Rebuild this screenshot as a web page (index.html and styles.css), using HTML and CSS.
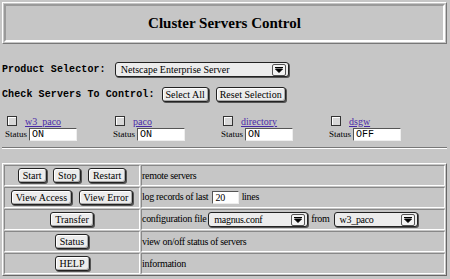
FILE: index.html
```html
<!DOCTYPE html>
<html lang="en">
<head>
    <meta charset="UTF-8">
    <title>Cluster Servers Control</title>
    <link rel="stylesheet" href="styles.css">
</head>
<body>
    <div class="banner">
        <div class="banner-inner">
            <h1>Cluster Servers Control</h1>
        </div>
    </div>

    <div class="form-row product-row">
        <span class="label">Product Selector:</span>
        <span class="select wide">
            <span class="select-text">Netscape Enterprise Server</span>
            <span class="arrow"><svg width="8" height="6" viewBox="0 0 8 6"><path d="M0 0.5h8M0.5 2h7L4 5.5z" stroke="#000" stroke-width="1" fill="#000"/></svg></span>
        </span>
    </div>

    <div class="form-row check-row">
        <span class="label">Check Servers To Control:</span>
        <button class="btn">Select All</button>
        <button class="btn">Reset Selection</button>
    </div>

    <div class="servers">
        <div class="server">
            <div class="server-name"><span class="checkbox"></span><a href="#">w3_paco</a></div>
            <div class="server-status">Status <span class="field">ON</span></div>
        </div>
        <div class="server">
            <div class="server-name"><span class="checkbox"></span><a href="#">paco</a></div>
            <div class="server-status">Status <span class="field">ON</span></div>
        </div>
        <div class="server">
            <div class="server-name"><span class="checkbox"></span><a href="#">directory</a></div>
            <div class="server-status">Status <span class="field">ON</span></div>
        </div>
        <div class="server">
            <div class="server-name"><span class="checkbox"></span><a href="#">dsgw</a></div>
            <div class="server-status">Status <span class="field">OFF</span></div>
        </div>
    </div>

    <hr class="rule">

    <table class="controls">
        <tr>
            <td class="actions">
                <button class="btn">Start</button>
                <button class="btn">Stop</button>
                <button class="btn">Restart</button>
            </td>
            <td class="desc">remote servers</td>
        </tr>
        <tr>
            <td class="actions">
                <button class="btn">View Access</button>
                <button class="btn">View Error</button>
            </td>
            <td class="desc">log records of last <span class="field small">20</span> lines</td>
        </tr>
        <tr>
            <td class="actions"><button class="btn">Transfer</button></td>
            <td class="desc">configuration file<span class="select conf">
                    <span class="select-text">magnus.conf</span>
                    <span class="arrow"><svg width="8" height="6" viewBox="0 0 8 6"><path d="M0 0.5h8M0.5 2h7L4 5.5z" stroke="#000" stroke-width="1" fill="#000"/></svg></span>
                </span>from<span class="select from">
                    <span class="select-text">w3_paco</span>
                    <span class="arrow"><svg width="8" height="6" viewBox="0 0 8 6"><path d="M0 0.5h8M0.5 2h7L4 5.5z" stroke="#000" stroke-width="1" fill="#000"/></svg></span>
                </span>
            </td>
        </tr>
        <tr>
            <td class="actions"><button class="btn">Status</button></td>
            <td class="desc">view on/off status of servers</td>
        </tr>
        <tr>
            <td class="actions"><button class="btn">HELP</button></td>
            <td class="desc">information</td>
        </tr>
    </table>
</body>
</html>
```

FILE: styles.css
```css
body {
    margin: 0;
    padding: 2px 3px 0 2px;
    background: #c6c6c6;
    font-family: 'Liberation Serif', 'Times New Roman', serif;
    font-size: 10px;
    color: #000;
}

.banner {
    height: 42px;
    border: 1px solid;
    border-color: #fff #777 #777 #fff;
    padding: 1px;
    box-sizing: border-box;
}

.banner-inner {
    height: 100%;
    box-sizing: border-box;
    border: 2px solid;
    border-color: #9a9a9a #fff #fff #9a9a9a;
    display: flex;
    align-items: center;
    justify-content: center;
}

h1 {
    margin: 0;
    font-size: 15px;
    font-weight: bold;
}

.form-row {
    display: flex;
    align-items: center;
}

.product-row {
    margin-top: 17px;
    height: 17px;
}

.check-row {
    margin-top: 8px;
    height: 16px;
}

.label {
    font-family: 'Liberation Mono', 'Courier New', monospace;
    font-weight: bold;
    font-size: 10px;
    letter-spacing: 0.1px;
    margin-right: 9px;
}

.check-row .label {
    margin-right: 5px;
}

.btn {
    font-family: 'Liberation Serif', 'Times New Roman', serif;
    font-size: 10px;
    background: #ececec;
    border: 1px solid #222;
    border-radius: 3px;
    box-shadow: 1px 1px 0 #555, inset -1px -1px 0 #aaa, inset 1px 1px 0 #fff;
    padding: 0 4px;
    height: 15px;
    margin: 0 2px;
    line-height: 13px;
}

.check-row .btn {
    padding: 0 3px;
    margin-right: 5px;
}

.select {
    display: inline-flex;
    align-items: center;
    height: 15px;
    box-sizing: border-box;
    border: 1px solid #222;
    border-radius: 3px;
    background: #ececec;
    box-shadow: 1px 1px 0 #555;
    font-size: 10px;
    vertical-align: middle;
}

.select-text {
    flex: 1;
    padding-left: 5px;
    white-space: nowrap;
    overflow: hidden;
}

.arrow {
    width: 12px;
    height: 10px;
    margin-right: 2px;
    border: 1px solid #555;
    border-radius: 2px;
    background: #f4f4f4;
    display: flex;
    align-items: center;
    justify-content: center;
}

.wide {
    width: 174px;
}

.conf {
    width: 100px;
    margin: 0 3px 0 2px;
}

.from {
    width: 84px;
    margin-left: 4px;
}

.servers {
    display: grid;
    grid-template-columns: repeat(4, 108px);
    margin-top: 13px;
    padding-left: 3px;
}

.server-name {
    display: flex;
    align-items: center;
    height: 12px;
}

.checkbox {
    width: 8px;
    height: 8px;
    border: 1px solid #333;
    background: #d8d8d8;
    box-shadow: inset 1px 1px 0 #fff;
    margin: 0 8px 0 2px;
}

a {
    color: #4a2aa8;
    font-size: 10px;
}

.server-status {
    display: flex;
    align-items: center;
    height: 14px;
    font-size: 9px;
}

.field {
    display: inline-block;
    width: 48px;
    height: 13px;
    box-sizing: border-box;
    background: #fff;
    border: 1px solid;
    border-color: #555 #eee #eee #555;
    font-family: 'Liberation Mono', 'Courier New', monospace;
    font-size: 10px;
    line-height: 11px;
    padding-left: 2px;
    margin-left: 2px;
}

.field.small {
    width: 27px;
    vertical-align: middle;
    font-family: 'Liberation Serif', serif;
}

.rule {
    margin: 6px 0 0;
    border: 0;
    border-top: 1px solid #777;
    border-bottom: 1px solid #fff;
    height: 0;
}

.controls {
    margin-top: 14px;
    width: 100%;
    border-collapse: separate;
    border-spacing: 1px;
    border: 1px solid;
    border-color: #fff #666 #666 #fff;
}

.controls td {
    border: 1px solid;
    border-color: #888 #fff #fff #888;
    padding: 0;
    height: 19px;
}

.actions {
    width: 134px;
    text-align: center;
    white-space: nowrap;
}

.desc {
    white-space: nowrap;
    letter-spacing: -0.3px;
}
```
